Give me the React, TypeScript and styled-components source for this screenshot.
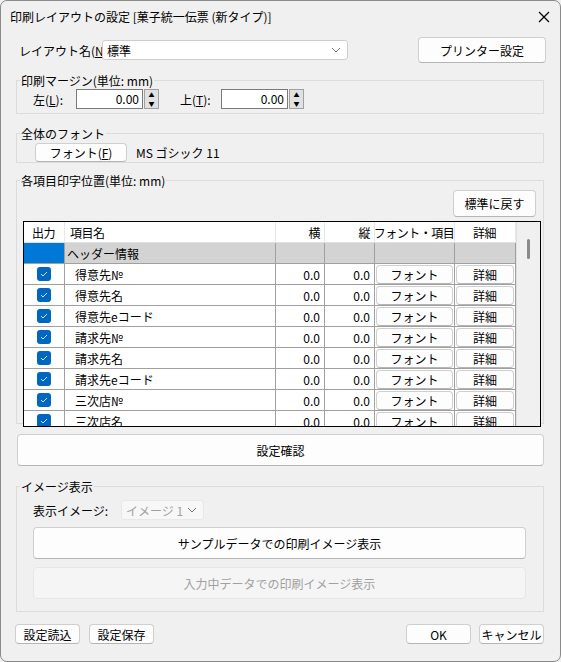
import React from 'react';
import styled, { createGlobalStyle } from 'styled-components';

const Global = createGlobalStyle`
  html, body { margin: 0; padding: 0; background: #f0f0f0; }
  body { font-family: "Noto Sans CJK JP", "Liberation Sans", sans-serif; font-size: 12px; color: #000; }
`;

const Window = styled.div`
  width: 561px;
  height: 662px;
  box-sizing: border-box;
  border: 1px solid #8a8a8a;
  border-radius: 7px;
  background: #f0f0f0;
  overflow: hidden;
  display: flex;
  flex-direction: column;
`;

const TitleBar = styled.div`
  height: 31px;
  display: flex;
  align-items: center;
  justify-content: space-between;
  padding: 0 10px 0 9px;
  font-size: 12px;
`;

const Body = styled.div`
  padding: 5px 16px 0 14px;
  display: flex;
  flex-direction: column;
`;

const Row = styled.div<{ $gap?: number }>`
  display: flex;
  align-items: center;
  gap: ${p => p.$gap ?? 8}px;
`;

const Label = styled.span<{ $w: number }>`
  width: ${p => p.$w}px;
  flex: none;
  white-space: nowrap;
`;

const Button = styled.button<{ $w?: number; $h?: number; $disabled?: boolean }>`
  font: inherit;
  font-size: 12px;
  width: ${p => (p.$w ? `${p.$w}px` : 'auto')};
  height: ${p => p.$h ?? 22}px;
  padding: 0;
  white-space: nowrap;
  background: ${p => (p.$disabled ? '#f5f5f5' : '#fdfdfd')};
  color: ${p => (p.$disabled ? '#a0a0a0' : '#000')};
  border: 1px solid ${p => (p.$disabled ? '#e6e6e6' : '#cfcfcf')};
  border-bottom-color: ${p => (p.$disabled ? '#e6e6e6' : '#b5b5b5')};
  border-radius: 4px;
`;

const Select = styled.div<{ $w: number; $disabled?: boolean }>`
  width: ${p => p.$w}px;
  height: 20px;
  box-sizing: border-box;
  border: 1px solid ${p => (p.$disabled ? '#e8e8e8' : '#cdcdcd')};
  background: ${p => (p.$disabled ? '#f7f7f7' : '#fff')};
  color: ${p => (p.$disabled ? '#a0a0a0' : '#000')};
  border-radius: 3px;
  display: flex;
  align-items: center;
  justify-content: space-between;
  padding: 0 6px 0 4px;
  white-space: nowrap;
`;

const Group = styled.fieldset<{ $h: number; $mt?: number }>`
  margin: ${p => p.$mt ?? 0}px 0 0 1px;
  height: ${p => p.$h}px;
  box-sizing: border-box;
  border: 1px solid #dcdcdc;
  padding: 0 5px 0 16px;
  min-width: 0;
  legend { padding: 0 1px; margin-left: -13px; font-size: 12px; }
`;

const NumInput = styled.div`
  display: flex;
  align-items: center;
  gap: 1px;
`;

const NumBox = styled.div`
  width: 67px;
  height: 20px;
  box-sizing: border-box;
  border: 1px solid #7a7a7a;
  background: #fff;
  text-align: right;
  padding-right: 3px;
  line-height: 18px;
`;

const Spinner = styled.div`
  width: 13px;
  height: 18px;
  display: flex;
  flex-direction: column;
  border: 1px solid #a0a0a0;
  background: #e1e1e1;
  font-size: 6px;
  line-height: 9px;
  text-align: center;
`;

const Table = styled.div`
  width: 518px;
  height: 206px;
  box-sizing: border-box;
  border: 1px solid #000;
  background: #fff;
  display: flex;
  overflow: hidden;
  margin-left: -10px;
`;

const Grid = styled.div`
  flex: 1;
  display: grid;
  grid-template-columns: 41px 211px 49px 50px 80px 61px;
  grid-auto-rows: 21px;
  align-content: start;
`;

const Cell = styled.div<{ $align?: string; $bg?: string; $pl?: number }>`
  border-right: 1px solid #a0a0a0;
  border-bottom: 1px solid #a0a0a0;
  background: ${p => p.$bg ?? '#fff'};
  display: flex;
  align-items: center;
  justify-content: ${p => p.$align ?? 'flex-start'};
  padding: 0 ${p => (p.$align === 'flex-end' ? 4 : 1)}px 0 ${p => p.$pl ?? 2}px;
  overflow: hidden;
  white-space: nowrap;
`;

const HeadCell = styled(Cell)`
  border-bottom: 1px solid #e0e0e0;
  border-right: 1px solid #e8e8e8;
  letter-spacing: -0.5px;
`;

const Check = styled.div`
  width: 14px;
  height: 14px;
  border-radius: 3px;
  background: #0067c0;
  display: flex;
  align-items: center;
  justify-content: center;
`;

const CellButton = styled(Button)`
  width: 100%;
  height: 19px;
`;

const ScrollBar = styled.div`
  width: 25px;
  background: #f0f0f0;
  border-left: 1px solid #e0e0e0;
  position: relative;
  &::after {
    content: '';
    position: absolute;
    left: 10px;
    top: 17px;
    width: 3px;
    height: 20px;
    background: #8a8a8a;
    border-radius: 2px;
  }
`;

const Chevron = () => (
  <svg width="10" height="6" viewBox="0 0 10 6"><path d="M1 1l4 4 4-4" fill="none" stroke="#777" strokeWidth="1" /></svg>
);

const rows = ['得意先№', '得意先名', '得意先eコード', '請求先№', '請求先名', '請求先eコード', '三次店№', '三次店名'];

export default function App() {
  return (
    <Window>
      <Global />
      <TitleBar>
        <span>印刷レイアウトの設定 [菓子統一伝票 (新タイプ)]</span>
        <svg width="12" height="12" viewBox="0 0 12 12"><path d="M1 1l10 10M11 1L1 11" stroke="#000" strokeWidth="1.2" /></svg>
      </TitleBar>
      <Body>
        <Row $gap={0} style={{ justifyContent: 'space-between', paddingLeft: 4 }}>
          <Row $gap={0}>
            <Label $w={83}>レイアウト名(<u>N</u>):</Label>
            <Select $w={246}><span>標準</span><Chevron /></Select>
          </Row>
          <Button $w={128} $h={26} style={{ marginRight: -2 }}>プリンター設定</Button>
        </Row>

        <Group $h={42} $mt={9}>
          <legend>印刷マージン(単位: mm)</legend>
          <Row $gap={0}>
            <Label $w={43}>左(<u>L</u>):</Label>
            <NumInput><NumBox>0.00</NumBox><Spinner><span>▲</span><span>▼</span></Spinner></NumInput>
            <Label $w={41} style={{ marginLeft: 21 }}>上(<u>T</u>):</Label>
            <NumInput><NumBox>0.00</NumBox><Spinner><span>▲</span><span>▼</span></Spinner></NumInput>
          </Row>
        </Group>

        <Group $h={38} $mt={11}>
          <legend>全体のフォント</legend>
          <Row $gap={9} style={{ marginTop: 1 }}>
            <Button $w={92} $h={19} style={{ marginLeft: 2 }}>フォント(<u>F</u>)</Button>
            <span>MS ゴシック 11</span>
          </Row>
        </Group>

        <Group $h={252} $mt={9}>
          <legend>各項目印字位置(単位: mm)</legend>
          <Row style={{ justifyContent: 'flex-end', marginTop: 1 }}>
            <Button $w={83} $h={27} style={{ marginRight: 2 }}>標準に戻す</Button>
          </Row>
          <Table style={{ marginTop: 4 }}>
            <Grid>
              <HeadCell $align="center" $pl={0}>出力</HeadCell>
              <HeadCell $pl={5}>項目名</HeadCell>
              <HeadCell $align="flex-end">横</HeadCell>
              <HeadCell $align="flex-end">縦</HeadCell>
              <HeadCell $align="center" $pl={0}>フォント・項目</HeadCell>
              <HeadCell $align="center" $pl={0}>詳細</HeadCell>

              <Cell $bg="#0078d7" />
              <Cell $bg="#d3d3d3">ヘッダー情報</Cell>
              <Cell $bg="#d3d3d3" />
              <Cell $bg="#d3d3d3" />
              <Cell $bg="#d3d3d3" />
              <Cell $bg="#d3d3d3" />

              {rows.map(r => (
                <React.Fragment key={r}>
                  <Cell $align="center" $pl={0}>
                    <Check>
                      <svg width="8" height="6" viewBox="0 0 8 6"><path d="M1 3l2 2 4-4" fill="none" stroke="#cfe3f7" strokeWidth="1" /></svg>
                    </Check>
                  </Cell>
                  <Cell $pl={10}>{r}</Cell>
                  <Cell $align="flex-end">0.0</Cell>
                  <Cell $align="flex-end">0.0</Cell>
                  <Cell $pl={1}><CellButton>フォント</CellButton></Cell>
                  <Cell $pl={1}><CellButton>詳細</CellButton></Cell>
                </React.Fragment>
              ))}
            </Grid>
            <ScrollBar />
          </Table>
        </Group>

        <Button $h={32} style={{ marginTop: 10, width: 527, marginLeft: 2 }}>設定確認</Button>

        <Group $h={134} $mt={12}>
          <legend>イメージ表示</legend>
          <Row $gap={13} style={{ marginTop: 5 }}>
            <span>表示イメージ:</span>
            <Select $w={83} $disabled><span>イメージ 1</span><Chevron /></Select>
          </Row>
          <Button $h={32} style={{ width: 493, marginTop: 7, display: 'block' }}>サンプルデータでの印刷イメージ表示</Button>
          <Button $h={32} $disabled style={{ width: 493, marginTop: 8, display: 'block' }}>入力中データでの印刷イメージ表示</Button>
        </Group>

        <Row $gap={9} style={{ marginTop: 12, justifyContent: 'space-between' }}>
          <Row $gap={9}>
            <Button $w={65} $h={20}>設定読込</Button>
            <Button $w={65} $h={20}>設定保存</Button>
          </Row>
          <Row $gap={8}>
            <Button $w={65} $h={20}>OK</Button>
            <Button $w={65} $h={20}>キャンセル</Button>
          </Row>
        </Row>
      </Body>
    </Window>
  );
}
